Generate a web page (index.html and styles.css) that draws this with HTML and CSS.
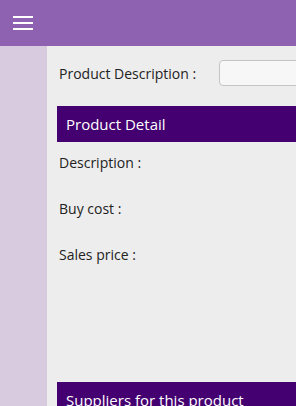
FILE: index.html
```html
<!DOCTYPE html>
<html lang="en">
<head>
    <meta name="viewport" content="width=device-width, initial-scale=1.0">
    <title>Products</title>
    <link rel="stylesheet" href="styles.css">
</head>
<body>
    <!-- Top bar with menu button -->
    <header class="topbar">
        <button class="menu-btn" aria-label="Menu">
            <svg width="20" height="16" viewBox="0 0 20 16">
                <rect x="0" y="1" width="20" height="2" fill="#fff"/>
                <rect x="0" y="7" width="20" height="2" fill="#fff"/>
                <rect x="0" y="13" width="20" height="2" fill="#fff"/>
            </svg>
        </button>
    </header>

    <div class="layout">
        <nav class="sidebar"></nav>

        <main class="content">
            <div class="search-row">
                <label for="product-desc">Product Description :</label>
                <input type="text" id="product-desc">
            </div>

            <section class="panel">
                <h2 class="panel-title">Product Detail</h2>
                <div class="field">Description :</div>
                <div class="field">Buy cost :</div>
                <div class="field">Sales price :</div>
            </section>

            <section class="panel suppliers">
                <h2 class="panel-title">Suppliers for this product</h2>
            </section>
        </main>
    </div>
</body>
</html>
```

FILE: styles.css
```css
body {
    margin: 0;
    font-family: "Open Sans", "Noto Sans", sans-serif;
    font-size: 14px;
    color: #222;
    background-color: #ededed;
    overflow: hidden;
}
.topbar {
    height: 46px;
    background-color: #8e62b0;
    display: flex;
    align-items: center;
}
.menu-btn {
    margin-left: 13px;
    padding: 0;
    border: none;
    background: none;
    display: flex;
    cursor: pointer;
}
.layout {
    display: flex;
    height: 360px;
}
.sidebar {
    width: 47px;
    flex-shrink: 0;
    background-color: #d8cbe0;
}
.content {
    flex: 1;
    padding-left: 10px;
    overflow: hidden;
}
.search-row {
    display: flex;
    align-items: center;
    height: 26px;
    margin-top: 14px;
    white-space: nowrap;
}
.search-row label {
    margin-left: 2px;
    width: 160px;
    flex-shrink: 0;
}
.search-row input {
    width: 120px;
    height: 26px;
    box-sizing: border-box;
    padding: 0 6px;
    border: 1px solid #c4c4c4;
    border-radius: 4px;
    background-color: #f7f7f7;
}
.panel {
    margin-top: 20px;
}
.panel-title {
    margin: 0;
    height: 36px;
    padding-left: 9px;
    display: flex;
    align-items: center;
    background-color: #440070;
    color: #fff;
    font-size: 15px;
    font-weight: normal;
    white-space: nowrap;
}
.field {
    height: 46px;
    padding: 11px 0 0 2px;
    box-sizing: border-box;
}
.suppliers {
    margin-top: 102px;
}
```
